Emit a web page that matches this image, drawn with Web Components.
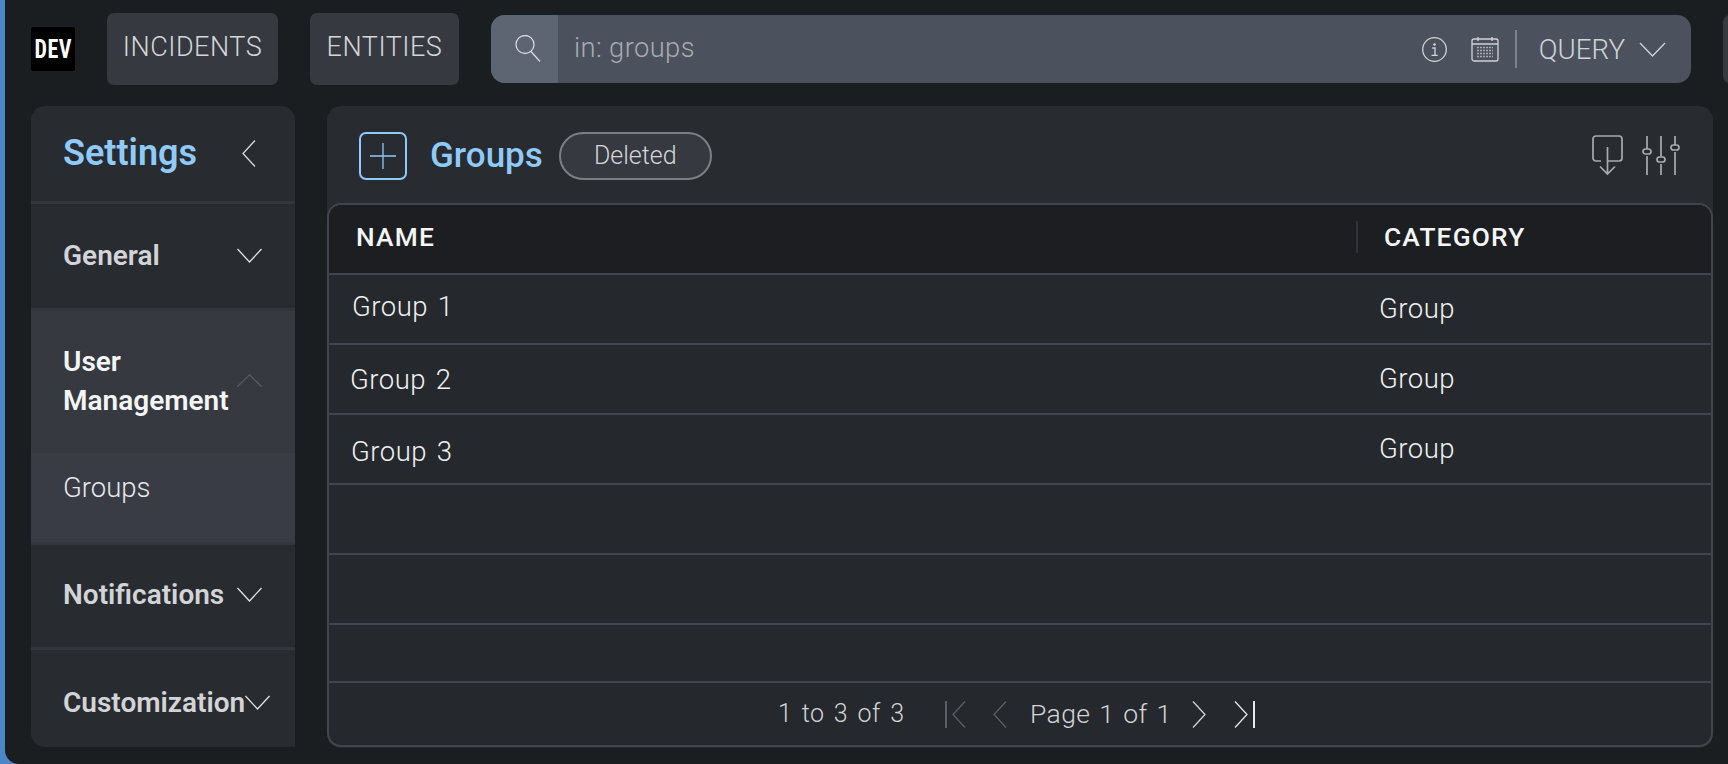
<!DOCTYPE html>
<html lang="en">
<head>
<meta charset="utf-8">
<title>Settings - Groups</title>
<style>
  html, body { margin: 0; height: 100%; background: #4a86c8; overflow: hidden; }
  body { font-family: Roboto, "Liberation Sans", sans-serif; }
</style>
</head>
<body>
<app-shell>
  <top-bar slot="top">
    <dev-logo></dev-logo>
    <nav-button style="width:171px">INCIDENTS</nav-button>
    <nav-button style="width:149px">ENTITIES</nav-button>
    <search-bar placeholder="in: groups"></search-bar>
    <nav-button stub></nav-button>
  </top-bar>
  <settings-nav slot="side">
    <nav-section label="General" style="height:107px;padding-bottom:2px"></nav-section>
    <nav-section label="User Management" open style="height:145px;padding-bottom:3px"></nav-section>
    <nav-item>Groups</nav-item>
    <nav-section label="Notifications" style="height:105px;padding-bottom:4px"></nav-section>
    <nav-section label="Customization" tight style="height:99px"></nav-section>
  </settings-nav>
  <groups-panel slot="main"></groups-panel>
</app-shell>

<script>
const ICONS = {
  search: `<svg width="26" height="27" viewBox="0 0 26 27"><circle cx="10" cy="9.500" r="9"/><path d="M16 16.500 L25 26.500"/></svg>`,
  info: `<svg width="25" height="25" viewBox="0 0 25 25"><circle cx="12.500" cy="12.500" r="11.800"/><circle cx="12.500" cy="7.500" r="1.300" fill="currentColor" stroke="none"/><path d="M10.200 11 h2.800 v7.200 M9.500 18.300 h6.200"/></svg>`,
  calendar: `<svg width="28" height="26" viewBox="0 0 28 26"><rect x="1" y="3" width="26" height="22" rx="2"/><path d="M1 8 h26 M7 1 v4 M21 1 v4"/><g stroke-dasharray="2 1" stroke-width="1.300" opacity=".7"><path d="M6 11.500 h16 M6 14.500 h16 M6 17.500 h16 M6 20.500 h16"/></g></svg>`,
  down: `<svg width="27" height="15" viewBox="0 0 27 15"><path d="M1 1 L13.500 14 L26 1"/></svg>`,
  up: `<svg width="25" height="13" viewBox="0 0 25 13"><path d="M0.500 12.500 L12.500 0.800 L24.500 12.500"/></svg>`,
  menuDown: `<svg width="25" height="15" viewBox="0 0 25 15"><path d="M0.500 1 L12.500 14 L24.500 1"/></svg>`,
  left: `<svg width="14" height="27" viewBox="0 0 14 27"><path d="M13 0.500 L1 13.500 L13 26.500"/></svg>`,
  right: `<svg width="14" height="27" viewBox="0 0 14 27"><path d="M1 0.500 L13 13.500 L1 26.500"/></svg>`,
  first: `<svg width="21" height="27" viewBox="0 0 21 27"><path d="M1 0 V27" stroke-width="2"/><path d="M20 0.500 L8 13.500 L20 26.500"/></svg>`,
  last: `<svg width="21" height="27" viewBox="0 0 21 27"><path d="M20 0 V27" stroke-width="2"/><path d="M1 0.500 L13 13.500 L1 26.500"/></svg>`,
  plus: `<svg width="26" height="26" viewBox="0 0 26 26"><path d="M13 0 V26 M0 13 H26"/></svg>`,
  download: `<svg width="31" height="41" viewBox="0 0 31 41"><path d="M9 26 H4 a3 3 0 0 1 -3 -3 V4 a3 3 0 0 1 3 -3 H27 a3 3 0 0 1 3 3 V23 a3 3 0 0 1 -3 3 H15.500" stroke-width="1.700"/><path d="M15.500 12 V39 M8 31.500 L15.500 39 L23 31.500" stroke-width="1.700"/></svg>`,
  sliders: `<svg width="38" height="41" viewBox="0 0 38 41"><g stroke-width="1.700"><path d="M5 1 V14 M5 21 V40 M19 1 V22 M19 29 V40 M33 1 V10 M33 17 V40"/><rect x="1" y="14" width="8" height="5" rx="2.500"/><rect x="15" y="22" width="8" height="5" rx="2.500"/><rect x="29" y="10" width="8" height="5" rx="2.500"/></g></svg>`
};

function define(tag, css, html, extra) {
  const tpl = document.createElement("template");
  tpl.innerHTML = `<style>${css}</style>${html}`;
  customElements.define(tag, class extends HTMLElement {
    constructor() {
      super();
      this.attachShadow({ mode: "open" }).appendChild(tpl.content.cloneNode(true));
    }
    connectedCallback() {
      if (extra) extra(this, this.shadowRoot);
    }
  });
}

define("ui-icon", `
  :host { display: inline-flex; flex: none; color: inherit; }
  svg { display: block; fill: none; stroke: currentColor; stroke-width: 1.300; }
`, ``, (el, root) => {
  root.innerHTML += ICONS[el.getAttribute("name")];
});

define("app-shell", `
  :host {
    display: grid;
    grid-template-columns: 264px 1386px;
    grid-template-rows: 72px 642px;
    column-gap: 32px;
    row-gap: 21px;
    box-sizing: border-box;
    width: 1723px;
    height: 764px;
    margin-left: 5px;
    padding: 13px 0 0 26px;
    background: #1b1e21;
    border-radius: 0 0 0 14px;
    overflow: hidden;
  }
  ::slotted([slot=top]) { grid-column: 1 / 3; }
`, `<slot name="top"></slot><slot name="side"></slot><slot name="main"></slot>`);

define("top-bar", `
  :host { display: flex; gap: 32px; align-items: center; width: 1730px; }
`, `<slot></slot>`);

define("dev-logo", `
  :host {
    display: flex; align-items: center; justify-content: center;
    width: 44px; height: 44px; flex: none;
    background: #000; border-radius: 2px;
    color: #fff; font: 700 25px/1 "Roboto Condensed", Roboto, sans-serif;
  }
  span { display: block; transform: scaleX(.88); letter-spacing: .5px; }
`, `<span>DEV</span>`);

define("nav-button", `
  :host {
    display: flex; align-items: center; justify-content: center; box-sizing: border-box;
    height: 72px; padding-bottom: 5px; flex: none;
    background: #363940; border-radius: 7px;
    color: #d4d6d9; font-weight: 300; font-size: 27px;
    letter-spacing: .5px;
  }
  :host([stub]) { width: 60px; height: 68px; }
`, `<slot></slot>`);

define("search-bar", `
  :host {
    display: flex; align-items: center; box-sizing: border-box;
    width: 1200px; height: 68px; flex: none;
    background: #4c525d; border-radius: 14px;
    color: #d0d3d7; font-weight: 300;
  }
  .glass {
    display: flex; align-items: center; justify-content: center;
    box-sizing: border-box; width: 67px; height: 100%; flex: none;
    padding: 0 0 2px 6px;
    background: #5e6572; border-radius: 14px 0 0 14px; color: #d8dadd;
  }
  .text { flex: 1; padding: 0 0 2px 16px; font-size: 27.300px; color: #a7abb2; letter-spacing: .4px; }
  .tools { display: flex; align-items: center; color: #d0d3d7; }
  .sep { width: 2px; height: 38px; background: #7b828d; margin: 0 22px 0 16px; }
  .query { font-size: 27.700px; margin-right: 14px; }
  .chev { margin-right: 25px; }
  .info { margin-right: 24px; }
`, `
  <div class="glass"><ui-icon name="search"></ui-icon></div>
  <div class="text"></div>
  <div class="tools">
    <ui-icon class="info" name="info"></ui-icon>
    <ui-icon name="calendar"></ui-icon>
    <div class="sep"></div>
    <div class="query">QUERY</div>
    <ui-icon class="chev" name="down"></ui-icon>
  </div>
`, (el, root) => {
  root.querySelector(".text").textContent = el.getAttribute("placeholder");
});

define("settings-nav", `
  :host {
    display: flex; flex-direction: column; height: 641px;
    background: #282b2f; border-radius: 14px 14px 0 14px; overflow: hidden;
  }
  header {
    display: flex; align-items: center; justify-content: space-between;
    box-sizing: border-box; height: 95px; flex: none;
    padding: 0 39px 0 32px; color: #90caf9;
    font-size: 36px; font-weight: 600;
  }
  span { padding-bottom: 2px; }
`, `<header><span>Settings</span><ui-icon name="left" style="color:#d8dadd"></ui-icon></header><slot></slot>`);

define("nav-section", `
  :host {
    display: flex; align-items: center; box-sizing: border-box; flex: none;
    padding-left: 32px; border-top: 3px solid #33363c;
    color: #d2d4d7; font-size: 28px; font-weight: 600; line-height: 39px;
  }
  :host([open]) { background: #363940; color: #f4f5f6; }
  :host([tight]) { padding-top: 8px; }
  .label { width: 174px; flex: none; }
  :host([tight]) .label { width: 182px; white-space: nowrap; }
  ui-icon { color: #e0e2e4; }
  :host([open]) ui-icon { color: #565a62; margin-top: -1px; }
`, `<div class="label"></div><ui-icon></ui-icon>`, (el, root) => {
  root.querySelector(".label").textContent = el.getAttribute("label");
  const icon = document.createElement("ui-icon");
  icon.setAttribute("name", el.hasAttribute("open") ? "up" : "menuDown");
  root.querySelector("ui-icon").replaceWith(icon);
});

define("nav-item", `
  :host {
    display: block; box-sizing: border-box; height: 89px; flex: none;
    padding: 15px 0 0 32px;
    background: #393c45; color: #e8e9eb;
    font-size: 27.500px; font-weight: 300; line-height: 39px;
  }
`, `<slot></slot>`);

define("groups-panel", `
  :host {
    display: flex; flex-direction: column; height: 642px;
    background: #282b2f; border-radius: 14px;
  }
  header {
    display: flex; align-items: center; box-sizing: border-box;
    height: 97px; flex: none; padding: 3px 33px 0 32px;
  }
  .add {
    display: flex; align-items: center; justify-content: center;
    box-sizing: border-box; width: 48px; height: 48px;
    border: 2px solid #90caf9; border-radius: 7px; color: #90caf9;
  }
  h1 { margin: -2px 16px 0 23px; font-size: 35px; font-weight: 500; color: #90caf9; }
  .chip {
    display: flex; align-items: center; justify-content: center;
    box-sizing: border-box; width: 153px; height: 48px; padding-bottom: 2px;
    border: 2px solid #7d7f82; border-radius: 24px; background: #363940;
    color: #d4d6d9; font-size: 25px; font-weight: 300;
  }
  .tools { margin: -2px 0 0 auto; display: flex; gap: 19px; color: #a9abae; }
  .table {
    display: flex; flex-direction: column; flex: 1; margin: 0 0 1px;
    border: 2px solid #40454e; border-radius: 14px; overflow: hidden;
    background: #25282c;
  }
`, `
  <header>
    <div class="add"><ui-icon name="plus"></ui-icon></div>
    <h1>Groups</h1>
    <div class="chip">Deleted</div>
    <div class="tools"><ui-icon name="download"></ui-icon><ui-icon name="sliders"></ui-icon></div>
  </header>
  <div class="table">
    <table-header></table-header>
    <table-row name="Group 1" category="Group" pad="23" shift="-4"></table-row>
    <table-row name="Group 2" category="Group" pad="21" shift="2"></table-row>
    <table-row name="Group 3" category="Group" pad="22" shift="6"></table-row>
    <table-row></table-row>
    <table-row></table-row>
    <table-row style="height:58px"></table-row>
    <table-footer></table-footer>
  </div>
`);

define("table-header", `
  :host {
    display: grid; grid-template-columns: 1027px 1fr; align-items: center;
    box-sizing: border-box; height: 70px; flex: none; padding-bottom: 5px;
    background: #1c1e22; border-bottom: 2px solid #40454e;
    color: #f4f5f6; font-size: 26.300px; font-weight: 500; letter-spacing: 1.200px;
  }
  .name { padding-left: 27px; }
  .cat { border-left: 2px solid #30333a; height: 32px; line-height: 32px; padding-left: 26px; }
`, `<div class="name">NAME</div><div class="cat">CATEGORY</div>`);

define("table-row", `
  :host {
    display: grid; grid-template-columns: 1023px 1fr; align-items: center;
    box-sizing: border-box; height: 70px; flex: none; padding-bottom: 2px;
    border-bottom: 2px solid #40454e;
    color: #f0f1f1; font-size: 27.500px; font-weight: 300; letter-spacing: .5px;
  }
  .n { word-spacing: 2.500px; }
  .c { padding-left: 27px; }
`, `<div class="n"></div><div class="c"></div>`, (el, root) => {
  const n = root.querySelector(".n");
  const c = root.querySelector(".c");
  n.textContent = el.getAttribute("name") || "";
  c.textContent = el.getAttribute("category") || "";
  n.style.paddingLeft = (el.getAttribute("pad") || 0) + "px";
  const shift = +el.getAttribute("shift") || 0;
  if (shift < 0) n.style.paddingBottom = -shift + "px";
  else n.style.paddingTop = shift + "px";
});

define("table-footer", `
  :host {
    display: flex; align-items: center; flex: 1;
    padding-left: 449px;
    color: #d2d4d7; font-size: 25px; font-weight: 300; letter-spacing: .4px;
  }
  .count { word-spacing: 3px; width: 167px; flex: none; padding-bottom: 2px; }
  .dim { color: #5a5e66; }
  .page { margin: 0 20px 0 23px; word-spacing: 2px; font-size: 26.500px; padding-bottom: 2px; }
  .gap { margin-left: 28px; }
  .bright { color: #e6e7e9; }
`, `
  <div class="count">1 to 3 of 3</div>
  <ui-icon class="dim" name="first"></ui-icon>
  <ui-icon class="dim" name="left" style="margin-left:27px"></ui-icon>
  <div class="page">Page 1 of 1</div>
  <ui-icon name="right"></ui-icon>
  <ui-icon class="gap bright" name="last"></ui-icon>
`);
</script>
</body>
</html>
